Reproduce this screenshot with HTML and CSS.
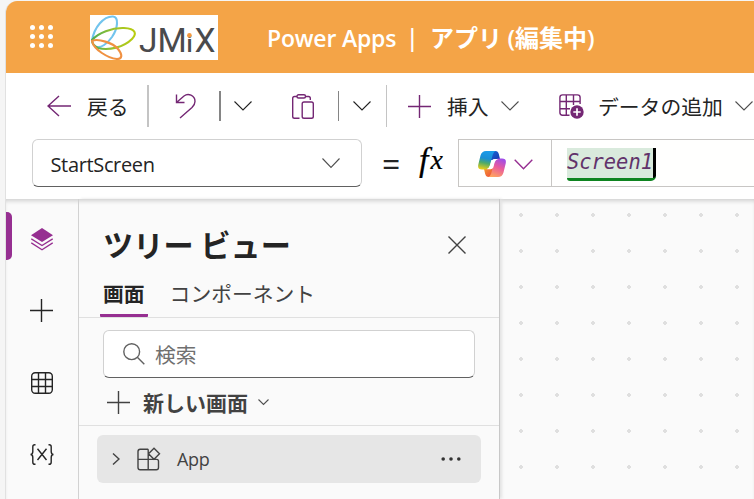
FILE: index.html
```html
<!DOCTYPE html>
<html lang="ja">
<head>
<meta charset="utf-8">
<title>Power Apps</title>
<link rel="stylesheet" href="styles.css">
</head>
<body>
<div class="window">
  <header class="header">
    <svg class="waffle" width="23" height="23" viewBox="0 0 23 23" fill="#fff">
      <circle cx="2.500" cy="2.500" r="2.500"/><circle cx="11.500" cy="2.500" r="2.500"/><circle cx="20.500" cy="2.500" r="2.500"/>
      <circle cx="2.500" cy="11.500" r="2.500"/><circle cx="11.500" cy="11.500" r="2.500"/><circle cx="20.500" cy="11.500" r="2.500"/>
      <circle cx="2.500" cy="20.500" r="2.500"/><circle cx="11.500" cy="20.500" r="2.500"/><circle cx="20.500" cy="20.500" r="2.500"/>
    </svg>
    <svg class="logo" width="128" height="45" viewBox="0 0 128 45">
      <defs>
        <linearGradient id="leaf" x1="0" x2="1" y1="0" y2="0"><stop offset="0" stop-color="#4bac55"/><stop offset=".5" stop-color="#9cc32c"/><stop offset="1" stop-color="#b9cc10"/></linearGradient>
      </defs>
      <rect width="128" height="45" fill="#fff"/>
      <g fill="none" stroke-width="2.100">
        <path d="M2 26C4 12 14 1 23 1.500C29 2 28 13 22 22C17 29 11 33 7 32" stroke="#72c4ed"/>
        <path d="M2 25C8 18 22 12.500 34 13C46 13.500 47 19 42 24C34 32 19 36 8 33C4 31 2 29 2 25Z" stroke="url(#leaf)"/>
        <path d="M2 26C8 23 23 28 28 34C33 40 32 44 27 44C18 43 4 35 2 26Z" stroke="#f09142"/>
      </g>
      <text class="logo-text" y="37"><tspan x="49">J</tspan><tspan x="67.500">M</tspan><tspan x="96.500" class="logo-i">i</tspan><tspan x="104.500">X</tspan></text>
      <circle cx="99.400" cy="20.200" r="2.300" fill="#f3993f"/>
    </svg>
    <div class="title"><span class="product">Power Apps</span><span class="bar">|</span><span class="doc">アプリ <span class="paren">(</span>編集中<span class="paren">)</span></span></div>
  </header>

  <nav class="commands">
    <button class="cmd back">
      <svg width="24" height="22" viewBox="0 0 24 22" class="ln accent"><path d="M24 11H1M12 1L1 11L12 21"/></svg>
      <span>戻る</span>
    </button>
    <i class="rule tall thick"></i>
    <button class="cmd undo"><svg width="22" height="26" viewBox="0 0 22 26" class="ln accent"><path d="M1.500 1.500V9.500H9.500M1.500 9.500L9 3C13 0 20 2 20 8.500C20 11 19 12.500 17 14.500L5 25"/></svg></button>
    <i class="rule mid"></i>
    <button class="cmd drop"><svg class="ln fine" width="18" height="10" viewBox="0 0 18 10"><path d="M.5 .5L9 9L17.500 .5"/></svg></button>
    <button class="cmd paste"><svg width="22" height="25" viewBox="0 0 22 25" class="ln accent"><path d="M5 2.500H2.500Q.7 2.500 .7 4.300V22.500Q.7 24.300 2.500 24.300H7.500M13.500 2.500H16.500Q18.300 2.500 18.300 4.300V6"/><rect x="5" y=".7" width="8.500" height="3.300" rx="1.500"/><rect x="10.200" y="8" width="11.100" height="16.300" rx="1.800"/></svg></button>
    <i class="rule thin"></i>
    <button class="cmd drop2"><svg class="ln fine" width="18" height="10" viewBox="0 0 18 10"><path d="M.5 .5L9 9L17.500 .5"/></svg></button>
    <i class="rule tall"></i>
    <button class="cmd insert">
      <svg width="23" height="23" viewBox="0 0 23 23" class="ln accent"><path d="M11.500 0V23M0 11.500H23"/></svg>
      <span>挿入</span>
      <svg class="ln soft" width="18" height="10" viewBox="0 0 18 10"><path d="M.5 .5L9 9L17.500 .5"/></svg>
    </button>
    <button class="cmd data">
      <svg width="25" height="25" viewBox="0 0 25 25" class="ln accent"><path d="M10.500 21.200H3.500Q.9 21.200 .9 18.600V3.500Q.9 .9 3.500 .9H18.500Q21.100 .9 21.100 3.500V10M.9 7.500H21M.9 14.700H11M7.300 .9V21.200M14.500 .9V11"/><circle cx="18" cy="18" r="6.700" class="solid"/><path d="M18 14.300V21.700M14.300 18H21.700" class="knock"/></svg>
      <span>データの追加</span>
      <svg class="ln soft" width="18" height="10" viewBox="0 0 18 10"><path d="M.5 .5L9 9L17.500 .5"/></svg>
    </button>
  </nav>

  <section class="formula">
    <div class="select"><span>StartScreen</span><svg class="ln soft" width="18" height="11" viewBox="0 0 18 11"><path d="M.5 .5L9 9.500L17.500 .5"/></svg></div>
    <span class="equals">=</span>
    <span class="fx">f<span>x</span></span>
    <div class="editor">
      <div class="copilot">
        <svg width="28" height="26" viewBox="0 0 28 26">
          <defs>
            <linearGradient id="ca" x1=".5" x2=".3" y1="0" y2="1"><stop offset="0" stop-color="#199bea"/><stop offset=".4" stop-color="#198ed4"/><stop offset=".65" stop-color="#4eaa68"/><stop offset="1" stop-color="#edce16"/></linearGradient>
            <linearGradient id="cb" x1=".7" x2=".3" y1="0" y2="1"><stop offset="0" stop-color="#a04de8"/><stop offset=".45" stop-color="#e95b9d"/><stop offset="1" stop-color="#ffa45f"/></linearGradient>
            <linearGradient id="cc" x1="0" x2="1" y1="0" y2="1"><stop offset="0" stop-color="#166bd8"/><stop offset="1" stop-color="#1733ad"/></linearGradient>
            <linearGradient id="cd" x1="0" x2="1" y1="0" y2="1"><stop offset="0" stop-color="#f49b31"/><stop offset="1" stop-color="#ed443d"/></linearGradient>
          </defs>
          <path d="M12 0H17.500Q20 0 20.800 3L22 8H18Q15.500 8 14.500 9L12 9Z" fill="url(#cc)"/>
          <path d="M16 26H10.500Q8 26 7.200 23L6 18H10Q12.500 18 13.500 17L16 17Z" fill="url(#cd)"/>
          <path d="M8 0H18Q15.700 .3 14.800 3.500L12 14Q10.800 18.500 7 18.500H4Q-.8 18.500 .3 13.500L2.500 4.500Q3.800 0 8 0Z" fill="url(#ca)"/>
          <path d="M20 26H10Q12.300 25.700 13.200 22.500L16 12Q17.200 7.500 21 7.500H24Q28.800 7.500 27.700 12.500L25.500 21.500Q24.200 26 20 26Z" fill="url(#cb)"/>
          <path d="M17.300 8H20.500Q17.500 8.500 16.500 12L15.300 16.500Q14.500 18.300 12.500 18.300H8.500Q11.200 17.500 12.200 14L13.500 10Q14.500 8 17.300 8Z" fill="#fff"/>
        </svg>
        <svg class="ln violet" width="19" height="11" viewBox="0 0 19 11"><path d="M.7 .7L9.500 9.700L18.300 .7"/></svg>
      </div>
      <div class="code"><span class="token">Screen1</span></div>
    </div>
  </section>

  <main class="body">
    <aside class="rail">
      <button class="nav on"><svg width="22" height="23" viewBox="0 0 22 23" fill="none" stroke="#962f91" stroke-width="1.300"><path d="M11 0L22 7.200L11 14L0 7.200Z" fill="#962f91" stroke="none"/><path d="M.3 10.800L11 17.500L21.700 10.800M.3 14.800L11 21.700L21.700 14.800"/></svg></button>
      <button class="nav add"><svg class="ln" width="23" height="23" viewBox="0 0 23 23"><path d="M11.500 0V23M0 11.500H23"/></svg></button>
      <button class="nav"><svg class="ln" width="22" height="22" viewBox="0 0 22 22"><rect x=".7" y=".7" width="20.600" height="20.600" rx="3.500"/><path d="M7.500 .7V21.300M14.500 .7V21.300M.7 7.500H21.300M.7 14.500H21.300"/></svg></button>
      <button class="nav"><svg class="ln" width="24" height="21" viewBox="0 0 24 21"><path d="M5.500 .7H4.800Q2.800 .7 2.800 2.800V7.500Q2.800 10.500 .5 10.500Q2.800 10.500 2.800 13.500V18.200Q2.800 20.300 4.800 20.300H5.500M18.500 .7H19.200Q21.200 .7 21.200 2.800V7.500Q21.200 10.500 23.500 10.500Q21.200 10.500 21.200 13.500V18.200Q21.200 20.300 19.200 20.300H18.500M7.500 4.700L16.500 16M16.500 4.700L7.500 16"/></svg></button>
    </aside>

    <section class="panel">
      <div class="panel-head"><h1>ツリー ビュー</h1><svg class="ln gray" width="18" height="18" viewBox="0 0 18 18"><path d="M.5 .5L17.500 17.500M17.500 .5L.5 17.500"/></svg></div>
      <div class="tabs"><span class="tab current">画面</span><span class="tab">コンポーネント</span></div>
      <div class="tools">
        <div class="search"><svg class="ln" width="22" height="22" viewBox="0 0 22 22"><circle cx="8.700" cy="8.700" r="7.900"/><path d="M14.300 14.300L21.300 21.300"/></svg><span>検索</span></div>
        <div class="new"><svg class="ln gray" width="23" height="23" viewBox="0 0 23 23"><path d="M11.500 0V23M0 11.500H23"/></svg><span>新しい画面</span><svg class="ln soft" width="11" height="7" viewBox="0 0 11 7"><path d="M.5 .5L5.500 5.500L10.500 .5"/></svg></div>
      </div>
      <div class="row">
        <svg class="ln gray" width="8" height="12" viewBox="0 0 8 12"><path d="M1 .5L7 6L1 11.500"/></svg>
        <svg class="ln gray app-icon" width="24" height="24" viewBox="0 0 24 24"><path d="M11.200 2.200H3.200Q1 2.200 1 4.400V20.500Q1 22.700 3.200 22.700H19.300Q21.500 22.700 21.500 20.500V14.200Q21.500 12.400 19.700 12.400H1M11.200 2.200V22.700M17 1.200L22.500 6.700L17 12.200L11.500 6.700Z"/></svg>
        <span>App</span>
        <svg class="more" width="20" height="4" viewBox="0 0 20 4" fill="#333"><circle cx="2.200" cy="2" r="1.800"/><circle cx="10" cy="2" r="1.800"/><circle cx="17.800" cy="2" r="1.800"/></svg>
      </div>
    </section>

    <section class="canvas">
      <svg width="251" height="300">
        <defs><pattern id="dots" width="36" height="36" patternUnits="userSpaceOnUse"><path d="M17 14h2v1h1v2h-1v1h-2v-1h-1v-2h1z" fill="#dfdfdf"/></pattern></defs>
        <rect width="251" height="300" fill="url(#dots)"/>
      </svg>
    </section>
  </main>
</div>
</body>
</html>
```
FILE: styles.css
```css
* { box-sizing: border-box; }
body {
  margin: 0;
  width: 754px;
  height: 499px;
  overflow: hidden;
  padding: 1px 0 0 5px;
  background: #f5f5f5;
  font-family: "Open Sans", "Noto Sans CJK JP", sans-serif;
  font-size: 20.8px;
  color: #242424;
}
button { display: flex; align-items: center; padding: 0; border: 0; background: none; font: inherit; color: inherit; }
svg { display: block; flex: none; }
.window { display: flex; flex-direction: column; height: 498px; border-left: 1px solid #e1e1e1; border-top-left-radius: 12px; overflow: hidden; background: #fff; }

.ln { fill: none; stroke: #242424; stroke-width: 1.4; }
.ln.accent { stroke: #742774; }
.ln.accent .solid { fill: #742774; stroke: none; }
.ln.accent .knock { stroke: #fff; stroke-width: 1.7; }
.ln.violet { stroke: #962f91; }
.ln.gray { stroke: #424242; }
.ln.fine { stroke-width: 1.1; }
.ln.soft { stroke: #505050; stroke-width: 1.1; }

.header { display: flex; align-items: center; flex: none; height: 72px; padding-left: 24px; background: #f4a447; color: #fff; }
.waffle { margin-top: -1px; }
.logo { margin-left: 37px; }
.logo-text { font-family: Roboto, sans-serif; font-size: 33.5px; fill: #4a4a4c; }
.logo-i { font-size: 24px; font-weight: 500; }
.title { display: flex; align-items: center; margin-left: 49px; font-weight: 600; font-size: 23px; white-space: nowrap; }
.product { width: 129px; padding-top: 2px; letter-spacing: -0.2px; }
.bar { width: 34px; padding-left: 10px; }
.doc { margin-top: -1px; font-family: "Noto Sans CJK JP", sans-serif; font-weight: 700; font-size: 24px; }
.paren { font-family: "Open Sans", sans-serif; font-weight: 600; }

.commands { display: flex; align-items: center; flex: none; height: 66px; padding-left: 41px; font-family: "Noto Sans CJK JP", sans-serif; white-space: nowrap; }
.commands span { line-height: 30px; text-align: left; }
.back { width: 100px; gap: 16px; }
.rule { flex: none; width: 1px; background: #c4c4c4; }
.tall { height: 42px; }
.thick { width: 2px; }
.mid { width: 2px; height: 30px; background: #858585; }
.thin { height: 30px; background: #858585; }
.undo { width: 70px; padding-left: 26px; }
.drop { width: 71px; padding-left: 13px; }
.paste { width: 46px; }
.drop2 { width: 47px; padding-left: 14px; }
.insert { width: 172px; padding-left: 21px; }
.insert span { width: 54px; margin-left: 16px; }
.data span { width: 137px; margin-left: 14px; }

.formula { display: flex; flex: none; height: 60px; padding-left: 26px; }
.select { display: flex; align-items: center; justify-content: space-between; width: 330px; height: 48px; padding: 0 21px 0 17.5px; border: 1px solid #d1d1d1; border-bottom-color: #616161; border-radius: 6px; }
.select span { font-size: 20px; letter-spacing: -0.35px; line-height: 28px; padding-top: 3px; }
.equals { width: 36px; margin-left: 20px; font-size: 32px; line-height: 49px; }
.fx { display: flex; align-items: baseline; width: 40px; padding-left: 1px; font: italic 34px/42px "Liberation Serif", serif; color: #000; -webkit-text-stroke: 0.2px; }
.fx span { margin-left: 2px; font-size: 28px; transform: translateY(-2px); }
.editor { display: flex; flex: 1; height: 48px; border: 1px solid #c8c6c4; border-right: 0; background: #fffffe; }
.copilot { display: flex; align-items: center; gap: 8px; width: 93px; padding: 2px 0 0 19px; border-right: 1px solid #c8c6c4; }
.code { padding: 8px 0 0 15px; }
.token { display: block; width: 89px; height: 33px; border-bottom: 3px solid #0e8420; border-radius: 0 0 5px 3px; background: linear-gradient(90deg, #d9eadc 86px, #000 86px); color: #61336a; font: italic 20.400px/29px "DejaVu Sans Mono", monospace; }

.body { display: flex; flex: 1; background: #fafafa; box-shadow: inset 0 4px 4px -2px #cfcfcf; }
.rail { display: flex; flex-direction: column; gap: 24px; flex: none; width: 73px; padding-top: 13px; border-right: 1px solid #d1d1d1; }
.nav { justify-content: center; width: 72px; height: 48px; padding-top: 5px; }
.nav.add { padding-right: 2px; }
.nav.on { padding-top: 0; }
.nav.on svg { margin-top: 7px; }
.nav.on::before { content: ""; align-self: stretch; width: 6px; margin-right: 19px; margin-left: -25px; border-radius: 0 5px 5px 0; background: #962f91; }

.panel { flex: none; width: 421px; border-right: 1px solid #c8c8c8; box-shadow: 2px 0 3px #e3e3e3; font-family: "Noto Sans CJK JP", sans-serif; }
.panel-head { display: flex; align-items: center; justify-content: space-between; height: 70px; padding: 21px 33px 0 24px; }
h1 { margin: -2px 0 0; font-size: 30.2px; line-height: 44px; font-weight: 700; }
.tabs { display: flex; gap: 18px; height: 49px; padding-left: 21px; border-bottom: 1px solid #e0e0e0; }
.tab { height: 48px; padding: 7px 3px 0 3px; color: #424242; line-height: 34px; }
.tab + .tab { padding-left: 4px; }
.current { border-bottom: 3px solid #962f91; border-radius: 1px; color: #242424; font-weight: 700; }
.tools { height: 108px; padding: 12px 24px 0; border-bottom: 1px solid #e0e0e0; }
.search { display: flex; align-items: center; gap: 10px; height: 48px; padding-left: 19px; border: 1px solid #d1d1d1; border-bottom-color: #616161; border-radius: 6px; background: #fff; color: #707070; }
.search .ln { stroke: #616161; }
.new { display: flex; align-items: center; height: 48px; padding-left: 4px; color: #424242; font-size: 21px; font-weight: 700; }
.new span { width: 115px; margin-left: 13px; white-space: nowrap; }
.row { display: flex; align-items: center; width: 384px; height: 48px; margin: 9px 0 0 18px; padding: 0 20px 0 15px; border-radius: 6px; background: #e6e6e6; color: #424242; }
.row span { margin-left: 16px; font-family: "Open Sans", sans-serif; font-size: 18px; letter-spacing: -0.3px; }
.app-icon { margin-left: 17px; }
.more { margin-left: auto; }

.canvas { flex: 1; margin-left: 3px; overflow: hidden; }
```
